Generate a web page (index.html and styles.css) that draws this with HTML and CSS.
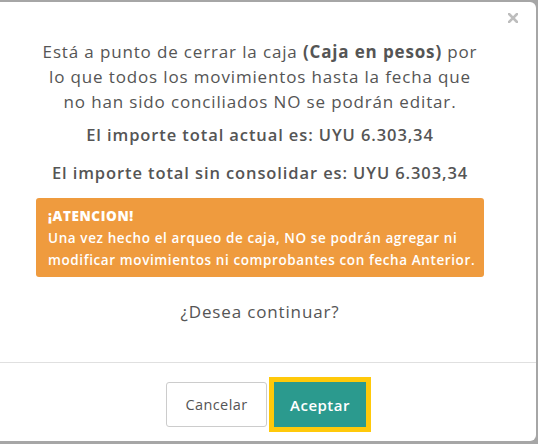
FILE: index.html
```html
<!DOCTYPE html>
<html lang="es">
<head>
<meta charset="utf-8">
<link rel="stylesheet" href="styles.css">
</head>
<body>
<div class="backdrop">
  <div class="modal">
    <div class="modal-header">
      <button class="close" aria-label="Cerrar">
        <svg width="10" height="10" viewBox="0 0 10 10"><path d="M1 1 L9 9 M9 1 L1 9" stroke="#bdbdbd" stroke-width="2.6" stroke-linecap="square"/></svg>
      </button>
    </div>
    <div class="modal-body">
      <p class="lead">Está a punto de cerrar la caja <b>(Caja en pesos)</b> por<br>lo que todos los movimientos hasta la fecha que<br>no han sido conciliados NO se podrán editar.</p>
      <p class="total">El importe total actual es: UYU 6.303,34</p>
      <p class="total total-2">El importe total sin consolidar es: UYU 6.303,34</p>
      <div class="alert">
        <div class="alert-title">¡ATENCION!</div>
        <div>Una vez hecho el arqueo de caja, NO se podrán agregar ni<br>modificar movimientos ni comprobantes con fecha Anterior.</div>
      </div>
      <p class="question">¿Desea continuar?</p>
    </div>
    <div class="modal-footer">
      <button class="btn btn-default">Cancelar</button>
      <button class="btn btn-primary">Aceptar</button>
    </div>
  </div>
</div>
</body>
</html>
```
FILE: styles.css
```css
html, body {
  margin: 0;
  padding: 0;
}
body {
  font-family: "Open Sans", "DejaVu Sans", sans-serif;
  color: #555;
  background: #a6a6a6;
  width: 538px;
  height: 444px;
  overflow: hidden;
}
.backdrop {
  padding-top: 2px;
}
.modal {
  background: #fff;
  border-radius: 6px;
  margin: 0 2px 0 -16px;
  height: 439px;
  display: flex;
  flex-direction: column;
}
.modal-header {
  display: flex;
  justify-content: flex-end;
  padding: 11px 18px 0 0;
  height: 26px;
}
.close {
  border: 0;
  background: none;
  padding: 0;
  width: 10px;
  height: 10px;
  display: flex;
}
.modal-body {
  padding: 0 52px;
  text-align: center;
  flex: 1;
}
.lead {
  margin: 0;
  font-size: 17px;
  line-height: 25px;
  letter-spacing: 0.85px;
  white-space: nowrap;
}
.lead b {
  font-weight: 700;
}
.total {
  margin: 9px 0 0;
  font-size: 16.5px;
  line-height: 24px;
  font-weight: 600;
  letter-spacing: 0.9px;
  white-space: nowrap;
}
.total-2 {
  margin-top: 14px;
}
.alert {
  margin-top: 13px;
  background: #ef9b3e;
  color: #fff;
  border-radius: 3px;
  text-align: left;
  padding: 7px 12px 6px;
  font-size: 13.5px;
  line-height: 22px;
  font-weight: 600;
  letter-spacing: 0.6px;
  white-space: nowrap;
}
.alert-title {
  font-weight: 800;
}
.question {
  margin: 23px 0 0;
  font-size: 17px;
  line-height: 24px;
  letter-spacing: 0.85px;
}
.modal-footer {
  border-top: 1px solid #e0e0e0;
  height: 79px;
  display: flex;
  justify-content: center;
  align-items: flex-start;
  gap: 7px;
  padding-top: 19px;
  box-sizing: border-box;
  padding-left: 12px;
}
.btn {
  font-family: inherit;
  height: 45px;
  border-radius: 3px;
  padding: 0;
  cursor: pointer;
}
.btn-default {
  background: #fff;
  border: 1px solid #ccc;
  color: #555;
  width: 101px;
  font-size: 14.5px;
  letter-spacing: 0.4px;
}
.btn-primary {
  background: #2b9a8e;
  border: 1px solid #2b9a8e;
  color: #fff;
  font-weight: 600;
  width: 92px;
  font-size: 15px;
  letter-spacing: 0.5px;
  outline: 5px solid #ffc90a;
  border-radius: 0;
}
```
